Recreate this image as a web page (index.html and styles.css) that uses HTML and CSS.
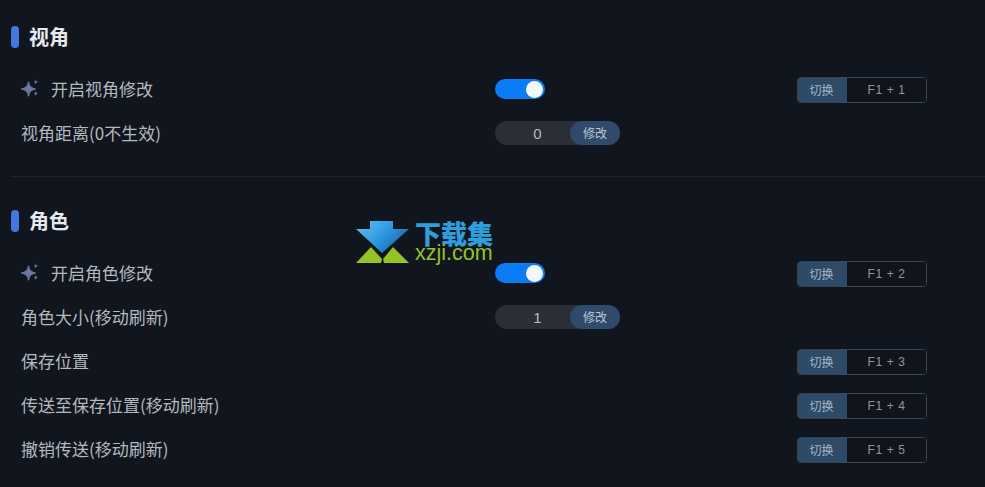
FILE: index.html
```html
<!DOCTYPE html>
<html lang="zh-CN">
<head>
<meta charset="utf-8">
<title>设置</title>
<link rel="stylesheet" href="styles.css">
</head>
<body>
<svg width="0" height="0" class="defs">
  <defs>
    <symbol id="spark" viewBox="0 0 18 18">
      <path d="M7.5 3 C8.2 7 9.6 8.8 14.5 10 C9.6 11.2 8.2 13 7.5 17 C6.8 13 5.4 11.2 0.5 10 C5.4 8.8 6.8 7 7.5 3 Z" fill="#6b78a0" stroke="#6b78a0" stroke-width="1.2" stroke-linejoin="round"/>
      <path d="M14.8 0.5 C15.1 2 15.7 2.6 17.2 3 C15.7 3.4 15.1 4 14.8 5.5 C14.5 4 13.9 3.4 12.4 3 C13.9 2.6 14.5 2 14.8 0.5 Z" fill="#6b78a0"/>
      <path d="M14.8 12 C15.1 13.5 15.7 14.1 17.2 14.5 C15.7 14.9 15.1 15.5 14.8 17 C14.5 15.5 13.9 14.9 12.4 14.5 C13.9 14.1 14.5 13.5 14.8 12 Z" fill="#6b78a0"/>
    </symbol>
  </defs>
</svg>
<main class="page">
  <section class="section">
    <h2 class="title">视角</h2>
    <div class="row">
      <div class="label"><svg class="spark"><use href="#spark"/></svg>开启视角修改</div>
      <div class="mid"><span class="toggle"><span class="knob"></span></span></div>
      <div class="keys"><span class="key-btn">切换</span><span class="key-val">F1 + 1</span></div>
    </div>
    <div class="row">
      <div class="label">视角距离(0不生效)</div>
      <div class="mid"><span class="stepper"><span class="step-val">0</span><span class="step-btn">修改</span></span></div>
    </div>
  </section>
  <section class="section second">
    <h2 class="title">角色</h2>
    <div class="row">
      <div class="label"><svg class="spark"><use href="#spark"/></svg>开启角色修改</div>
      <div class="mid"><span class="toggle"><span class="knob"></span></span></div>
      <div class="keys"><span class="key-btn">切换</span><span class="key-val">F1 + 2</span></div>
    </div>
    <div class="row">
      <div class="label">角色大小(移动刷新)</div>
      <div class="mid"><span class="stepper"><span class="step-val">1</span><span class="step-btn">修改</span></span></div>
    </div>
    <div class="row">
      <div class="label">保存位置</div>
      <div class="mid"></div>
      <div class="keys"><span class="key-btn">切换</span><span class="key-val">F1 + 3</span></div>
    </div>
    <div class="row">
      <div class="label">传送至保存位置(移动刷新)</div>
      <div class="mid"></div>
      <div class="keys"><span class="key-btn">切换</span><span class="key-val">F1 + 4</span></div>
    </div>
    <div class="row">
      <div class="label">撤销传送(移动刷新)</div>
      <div class="mid"></div>
      <div class="keys"><span class="key-btn">切换</span><span class="key-val">F1 + 5</span></div>
    </div>
  </section>
</main>
<div class="watermark">
  <svg class="wm-icon" viewBox="0 0 53 42" width="53" height="42">
    <defs>
      <linearGradient id="wmblue" x1="0" y1="0" x2="1" y2="0.6">
        <stop offset="0" stop-color="#62c4f2"/>
        <stop offset="0.55" stop-color="#2f9ae0"/>
        <stop offset="1" stop-color="#1a66ad"/>
      </linearGradient>
    </defs>
    <path d="M14 0 H37 V8 H53 L26 32 L0 8 H14 Z" fill="url(#wmblue)"/>
    <path d="M0 42 L15 26 L26 38 L25 42 Z" fill="#93c324"/>
    <path d="M28 42 L27 38 L37 26 L53 42 Z" fill="#93c324"/>
  </svg>
  <div class="wm-text">
    <span class="wm-cn">下载集</span>
    <span class="wm-en">xzji.com</span>
  </div>
</div>
</body>
</html>
```
FILE: styles.css
```css
* { box-sizing: border-box; }
html, body { margin: 0; padding: 0; }
body {
  width: 985px;
  height: 487px;
  overflow: hidden;
  background: #11161e;
  color: #b4b9c0;
  font-family: "Noto Sans CJK SC", "Noto Sans", sans-serif;
  position: relative;
}
.defs { position: absolute; }
.page { padding: 0 0 0 11px; }
.section { padding-top: 22px; padding-bottom: 21px; }
.section.second {
  border-top: 1px solid #1f242d;
  padding-top: 29px;
}
.title {
  margin: 0 0 15px;
  height: 30px;
  line-height: 30px;
  font-size: 20px;
  font-weight: 700;
  color: #e6e9ee;
  display: flex;
  align-items: center;
  gap: 10px;
}
.title::before {
  content: "";
  width: 8px;
  height: 22px;
  border-radius: 4px;
  background: #4278e0;
}
.row {
  display: grid;
  grid-template-columns: 484px 302px 130px;
  align-items: center;
  height: 44px;
}
.label {
  display: flex;
  align-items: center;
  padding-left: 10px;
  padding-bottom: 2px;
  font-size: 17px;
  color: #b4b9c0;
  white-space: nowrap;
}
.spark { width: 18px; height: 18px; margin-right: 12px; flex: none; }
.mid { display: flex; align-items: center; }
.toggle {
  width: 50px;
  height: 20px;
  border-radius: 10px;
  background: #0a7cf5;
  display: flex;
  align-items: center;
  justify-content: flex-end;
  padding-right: 2px;
}
.knob {
  width: 17px;
  height: 17px;
  border-radius: 50%;
  background: #f4f7fb;
}
.stepper {
  width: 125px;
  height: 24px;
  border-radius: 12px;
  background: #2a2e37;
  display: flex;
  align-items: center;
}
.step-val {
  flex: 1;
  text-align: center;
  font-family: "Liberation Sans", sans-serif;
  font-size: 15px;
  padding-left: 10px;
  color: #b9bdc4;
}
.step-btn {
  width: 50px;
  height: 24px;
  line-height: 23px;
  border-radius: 12px;
  background: #2f4a6b;
  color: #bcc6d2;
  font-size: 12px;
  text-align: center;
}
.keys {
  width: 130px;
  height: 26px;
  margin-top: 2px;
  display: flex;
  border: 1px solid #33465a;
  border-radius: 4px;
  overflow: hidden;
}
.key-btn {
  width: 49px;
  padding-right: 2px;
  background: #2d4a67;
  color: #a9b5c3;
  font-size: 12px;
  line-height: 23px;
  text-align: center;
}
.key-val {
  flex: 1;
  text-align: center;
  background: #11141a;
  color: #8f96a0;
  font-family: "Liberation Sans", sans-serif;
  font-size: 12px;
  letter-spacing: 0.6px;
  line-height: 24px;
}
.watermark {
  position: absolute;
  left: 356px;
  top: 221px;
  display: flex;
  gap: 6px;
  align-items: flex-start;
}
.wm-icon { display: block; }
.wm-text { display: flex; flex-direction: column; }
.wm-cn {
  height: 24px;
  font-size: 26px;
  line-height: 23px;
  font-weight: 900;
  color: #2f9fdc;
  white-space: nowrap;
}
.wm-en {
  font-family: "Liberation Sans", sans-serif;
  font-size: 21.5px;
  line-height: 16px;
  color: #93c324;
  white-space: nowrap;
}
```
